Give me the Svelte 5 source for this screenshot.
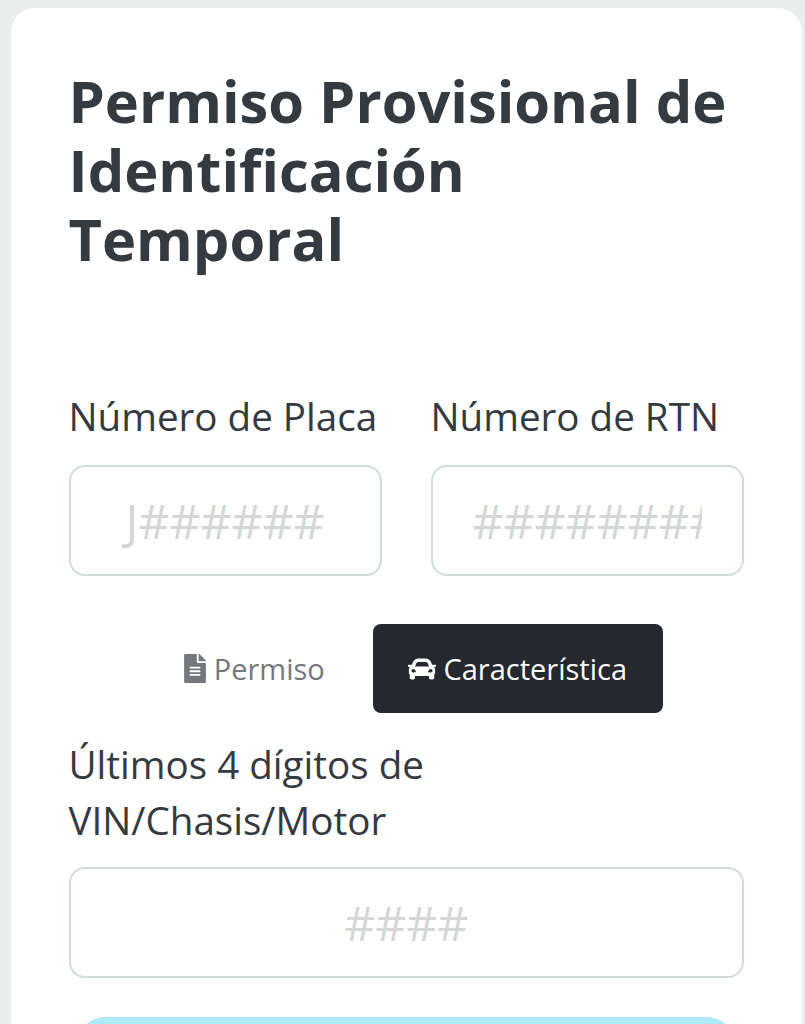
<script>
  const fields = [
    { label: 'Número de Placa', placeholder: 'J######' },
    { label: 'Número de RTN', placeholder: '##############' }
  ];
</script>

<main class="card">
  <h1>Permiso Provisional de Identificación Temporal</h1>

  <div class="row">
    {#each fields as f}
      <label class="field">
        <span class="label">{f.label}</span>
        <input type="text" placeholder={f.placeholder} />
      </label>
    {/each}
  </div>

  <div class="tabs">
    <button class="tab" type="button">
      <svg class="file" viewBox="0 0 384 512" aria-hidden="true"><path d="M224 136V0H24C10.7 0 0 10.7 0 24v464c0 13.3 10.7 24 24 24h336c13.3 0 24-10.7 24-24V160H248c-13.2 0-24-10.8-24-24zm64 236c0 6.6-5.4 12-12 12H108c-6.6 0-12-5.4-12-12v-8c0-6.6 5.4-12 12-12h168c6.6 0 12 5.4 12 12v8zm0-64c0 6.6-5.4 12-12 12H108c-6.6 0-12-5.4-12-12v-8c0-6.6 5.4-12 12-12h168c6.6 0 12 5.4 12 12v8zm0-72v8c0 6.6-5.4 12-12 12H108c-6.6 0-12-5.4-12-12v-8c0-6.6 5.4-12 12-12h168c6.6 0 12 5.4 12 12zm96-114.1v6.1H256V0h6.1c6.4 0 12.5 2.5 17 7l97.9 98c4.5 4.5 7 10.6 7 16.9z"/></svg>
      Permiso
    </button>
    <button class="tab active" type="button">
      <svg class="car" viewBox="0 0 512 512" aria-hidden="true"><path d="M499.99 176h-59.87l-16.64-41.6C406.38 91.63 365.57 64 319.5 64h-127c-46.06 0-86.88 27.63-103.99 70.4L71.87 176H12.01C4.2 176-1.53 183.34.37 190.91l6 24C7.7 220.25 12.5 224 18.01 224h20.07C24.65 235.73 16 252.78 16 272v48c0 16.12 6.16 30.67 16 41.93V416c0 17.67 14.33 32 32 32h32c17.67 0 32-14.33 32-32v-32h256v32c0 17.67 14.33 32 32 32h32c17.67 0 32-14.33 32-32v-54.07c9.84-11.25 16-25.8 16-41.93v-48c0-19.22-8.65-36.27-22.07-48H494c5.51 0 10.31-3.75 11.64-9.09l6-24c1.89-7.57-3.84-14.91-11.65-14.91zm-352.06-17.83c7.29-18.22 24.94-30.17 44.57-30.17h127c19.63 0 37.28 11.95 44.57 30.17L384 208H128l19.93-49.83zM96 319.8c-19.2 0-32-12.76-32-31.9S76.8 256 96 256s48 28.71 48 47.85-28.8 15.95-48 15.95zm320 0c-19.2 0-48 3.19-48-15.95S396.8 256 416 256s32 12.76 32 31.9-12.8 31.9-32 31.9z"/></svg>
      Característica
    </button>
  </div>

  <label class="field vin">
    <span class="label">Últimos 4 dígitos de VIN/Chasis/Motor</span>
    <input type="text" placeholder="####" />
  </label>

  <button class="submit" type="button" aria-label="Enviar"></button>
</main>

<style>
  :global(html), :global(body) {
    margin: 0;
    height: 1024px;
    overflow: hidden;
    background: #ebecec;
  }
  .card {
    box-sizing: border-box;
    width: 791px;
    height: 1100px;
    margin: 8px 0 0 11px;
    padding: 58px 58px 0 57.5px;
    background: #fff;
    border-radius: 24px;
    font-family: "Open Sans", sans-serif;
    color: #343a40;
  }
  h1 {
    margin: 0;
    font-size: 57.8px;
    font-weight: 700;
    line-height: 69px;
    color: #343a40;
  }
  .row {
    display: grid;
    grid-template-columns: 313px 313px;
    gap: 49px;
    margin-top: 115px;
  }
  .field {
    display: block;
  }
  .label {
    display: block;
    font-size: 38.6px;
    line-height: 56px;
    margin-bottom: 21px;
    white-space: nowrap;
  }
  input {
    display: block;
    box-sizing: border-box;
    width: 100%;
    height: 111px;
    padding: 0 40px;
    border: 2.5px solid #d4dbdb;
    border-radius: 16px;
    background: #fff;
    font: 400 48px "Open Sans", sans-serif;
    color: #495057;
    text-align: center;
    outline: none;
  }
  input::placeholder {
    color: #d5d6d6;
    opacity: 1;
  }
  .tabs {
    display: flex;
    justify-content: center;
    gap: 10px;
    margin-top: 48px;
    padding-right: 4px;
  }
  .tab {
    display: flex;
    align-items: center;
    justify-content: center;
    height: 89px;
    padding: 0 38px;
    border: 0;
    border-radius: 8px;
    background: transparent;
    font: 400 29px "Open Sans", sans-serif;
    color: #74787c;
  }
  .tab.active {
    box-sizing: border-box;
    width: 290px;
    padding: 0;
    background: #25282e;
    color: #fff;
  }
  .file {
    width: 22px;
    height: 29px;
    margin-right: 8px;
    fill: currentColor;
  }
  .car {
    width: 28px;
    height: 28px;
    margin-right: 7px;
    fill: currentColor;
  }
  .vin {
    margin-top: 23px;
  }
  .vin .label {
    width: 400px;
    margin-bottom: 19px;
    white-space: normal;
  }
  .submit {
    display: block;
    width: 658px;
    height: 92px;
    margin: 39px auto 0;
    border: 0;
    border-radius: 28px;
    background: #aeeaf7;
  }
</style>
